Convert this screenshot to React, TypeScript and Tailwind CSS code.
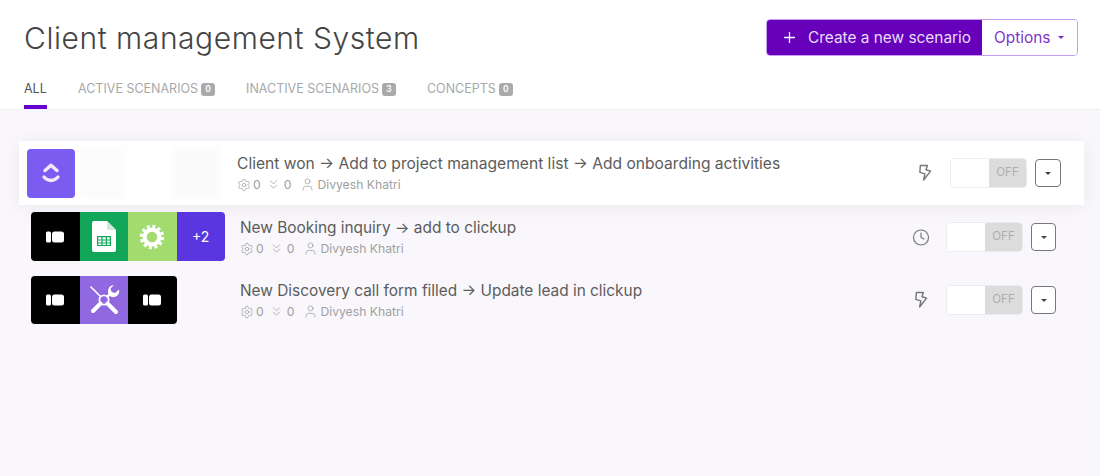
import { ChevronsDown, Clock, Plus, Settings, User } from "lucide-react";
import type { ReactNode } from "react";

const tabs = [
  { label: "ACTIVE SCENARIOS", count: 0 },
  { label: "INACTIVE SCENARIOS", count: 3 },
  { label: "CONCEPTS", count: 0 },
];

const MakeLogo = () => (
  <svg width="20" height="12" viewBox="0 0 20 12" fill="white">
    <rect x="1" y="0.5" width="5" height="11" rx="1.5" />
    <rect x="7" y="0.5" width="12" height="11" rx="2.5" />
  </svg>
);

const ClickUpLogo = () => (
  <svg width="22" height="24" viewBox="0 0 22 24" fill="none" stroke="#f1e9ff" strokeWidth="3.4" strokeLinecap="round" strokeLinejoin="round">
    <path d="M5 9.5 11 4.2l6 5.3" />
    <path d="M4 16c4 4.6 10 4.6 14 0" />
  </svg>
);

const SheetsLogo = () => (
  <svg width="24" height="31" viewBox="0 0 24 31">
    <path d="M2 0h13l9 9v20a2 2 0 0 1-2 2H2a2 2 0 0 1-2-2V2a2 2 0 0 1 2-2z" fill="white" />
    <path d="M15 0l9 9h-7a2 2 0 0 1-2-2z" fill="#cfe8d8" />
    <path d="M5 15h14v10H5z" fill="#12a65a" />
    <path d="M6.2 16.2h3.2v2.2H6.2zM10.6 16.2h3.2v2.2h-3.2zM15 16.2h2.8v2.2H15zM6.2 19.6h3.2v1.8H6.2zM10.6 19.6h3.2v1.8h-3.2zM15 19.6h2.8v1.8H15zM6.2 22.4h3.2v1.6H6.2zM10.6 22.4h3.2v1.6h-3.2zM15 22.4h2.8v1.6H15z" fill="white" />
  </svg>
);

const GearLogo = () => (
  <svg width="26" height="26" viewBox="0 0 26 26" fill="none" stroke="white">
    <circle cx="13" cy="13" r="7.4" strokeWidth="4.2" />
    <circle cx="13" cy="13" r="10.6" strokeWidth="3.2" strokeDasharray="3 2.55" />
  </svg>
);

const ToolsLogo = () => (
  <svg width="32" height="32" viewBox="0 0 32 32" fill="none" stroke="white" strokeLinecap="round">
    <circle cx="16" cy="16" r="4.6" strokeWidth="1.8" />
    <path d="M3 3l9.5 9.5" strokeWidth="1.6" />
    <path d="M19.5 19.5 28 28" strokeWidth="4" />
    <path d="M19.5 12.5 23 9" strokeWidth="2.6" />
    <path d="M12.5 19.5 5 27" strokeWidth="4" />
    <path d="M31 5.5l-4 3.5-3.5-1-1-3.5L26 1a6 6 0 0 0-6 6 6 6 0 0 0 4 6 6 6 0 0 0 7-7.5z" fill="white" stroke="none" />
  </svg>
);

const BoltIcon = () => (
  <svg width="14" height="18" viewBox="0 0 15 18" fill="none" stroke="#777" strokeWidth="1.5" strokeLinejoin="round">
    <path d="M2.5 1h7.5L8.6 5.5 13.5 7 6 16.5 7.4 10 2 8.4z" />
  </svg>
);

const Caret = ({ className }: { className: string }) => (
  <span className={`h-0 w-0 border-x-[3.5px] border-t-[3.5px] border-x-transparent ${className}`} />
);

const Tile = ({ bg, children }: { bg: string; children: ReactNode }) => (
  <div className={`flex h-full w-[48.5px] items-center justify-center first:rounded-l last:rounded-r ${bg}`}>
    {children}
  </div>
);

const Meta = ({ title, large }: { title: string; large?: boolean }) => (
  <div className="min-w-0 flex-1">
    <div className={`${large ? "text-[15.6px]" : "text-[15.4px]"} leading-[20px] text-[#5c5c5c]`}>{title}</div>
    <div className="mt-[3px] flex items-center text-[12.2px] leading-[16px] text-[#a0a0a0]">
      <Settings size={14} strokeWidth={1.3} />
      <span className="ml-[2px]">0</span>
      <ChevronsDown size={15} strokeWidth={1.3} className="ml-[5px]" />
      <span className="ml-[3px]">0</span>
      <User size={15} strokeWidth={1.2} className="ml-[9px]" />
      <span className="ml-[2px]">Divyesh Khatri</span>
    </div>
  </div>
);

const Controls = ({ icon, large }: { icon: ReactNode; large?: boolean }) => (
  <div className="flex items-center">
    <div className="flex w-[18px] justify-center">{icon}</div>
    <div className="ml-4 flex h-[30px] w-[77px] overflow-hidden rounded border border-[#ececec] bg-white">
      <div className="w-[38px] bg-white" />
      <div className="flex flex-1 items-center justify-center bg-[#dcdcdc] text-[11.5px] text-[#aeaeae]">OFF</div>
    </div>
    <button className={`${large ? "w-[26px]" : "w-[25px]"} ml-2 flex h-[28px] items-center justify-center rounded border border-[#777] bg-white`}>
      <Caret className="border-t-[#444]" />
    </button>
  </div>
);

export default function App() {
  return (
    <div className="h-[476px] w-[1100px] overflow-hidden bg-[#f9f7fb] font-['Inter',sans-serif]">
      {/* Header */}
      <header className="h-[110px] border-b border-[#f0eef3] bg-white px-6">
        <div className="flex items-start justify-between pt-[19px]">
          <h1 className="mt-[1px] text-[30px] font-light leading-[36px] tracking-[0.55px] text-[#444]">Client management System</h1>
          <div className="mr-[-2px] flex h-[37px] overflow-hidden rounded border border-[#c79cf2]">
            <button className="flex w-[215px] items-center bg-[#6600bb] pl-[14px] text-[15.4px] text-[#eadcf7]">
              <Plus size={17} strokeWidth={1.8} className="text-white" />
              <span className="ml-[10px]">Create a new scenario</span>
            </button>
            <button className="flex w-[95px] items-center bg-white pl-[12px] text-[15.4px] text-[#8034cc]">
              Options
              <Caret className="ml-[8px] border-t-[#7c2cc8]" />
            </button>
          </div>
        </div>
        <nav className="mt-[25px] flex text-[12.5px] leading-[16px] text-[#a8a8a8]">
          <div className="flex h-[28px] flex-col justify-between">
            <span className="text-[#555]">ALL</span>
            <span className="h-[4px] w-[23px] bg-[#6600cc]" />
          </div>
          {tabs.map((tab) => (
            <div key={tab.label} className="ml-[31px] flex h-[16px] items-center">
              {tab.label}
              <span className="ml-[3px] flex h-[13px] w-[14px] items-center justify-center rounded-[3px] bg-[#aaa] text-[8.5px] font-semibold text-white">
                {tab.count}
              </span>
            </div>
          ))}
        </nav>
      </header>

      {/* Scenario list */}
      <main className="pt-[31px]">
        <div className="ml-[19px] flex h-[64px] w-[1065px] items-center bg-white pl-[8px] pr-[23px] shadow-[0_2px_18px_rgba(0,0,0,0.06)]">
          <div className="flex h-[49px] w-[194px] shrink-0">
            <div className="flex h-full w-[48px] items-center justify-center rounded bg-[#7b5cf0]">
              <ClickUpLogo />
            </div>
            <div className="ml-[5px] h-full w-[45px] bg-[#fbfbfb] blur-[3px]" />
            <div className="ml-[48px] h-full w-[47px] bg-[#fafafa] blur-[3px]" />
          </div>
          <div className="ml-[16px] flex flex-1 items-center">
            <Meta large title="Client won → Add to project management list → Add onboarding activities" />
            <Controls large icon={<BoltIcon />} />
          </div>
        </div>

        <div className="ml-[31px] mt-[7px] flex h-[50px] w-[1025px] items-center">
          <div className="flex h-[49px] w-[194px] shrink-0 self-start">
            <Tile bg="bg-black"><MakeLogo /></Tile>
            <Tile bg="bg-[#12a65a]"><SheetsLogo /></Tile>
            <Tile bg="bg-[#a3dc6e]"><GearLogo /></Tile>
            <Tile bg="bg-[#5a36e0]"><span className="text-[14px] text-white">+2</span></Tile>
          </div>
          <div className="ml-[15px] flex flex-1 items-center">
            <Meta title="New Booking inquiry → add to clickup" />
            <Controls icon={<Clock size={19} strokeWidth={1.6} className="text-[#777]" />} />
          </div>
        </div>

        <div className="ml-[31px] mt-[14px] flex h-[48px] w-[1025px] items-center">
          <div className="flex h-[48px] w-[194px] shrink-0">
            <Tile bg="bg-black"><MakeLogo /></Tile>
            <Tile bg="bg-[#9068e0]"><ToolsLogo /></Tile>
            <Tile bg="bg-black"><MakeLogo /></Tile>
          </div>
          <div className="ml-[15px] flex flex-1 items-center">
            <Meta title="New Discovery call form filled → Update lead in clickup" />
            <Controls icon={<BoltIcon />} />
          </div>
        </div>
      </main>
    </div>
  );
}
